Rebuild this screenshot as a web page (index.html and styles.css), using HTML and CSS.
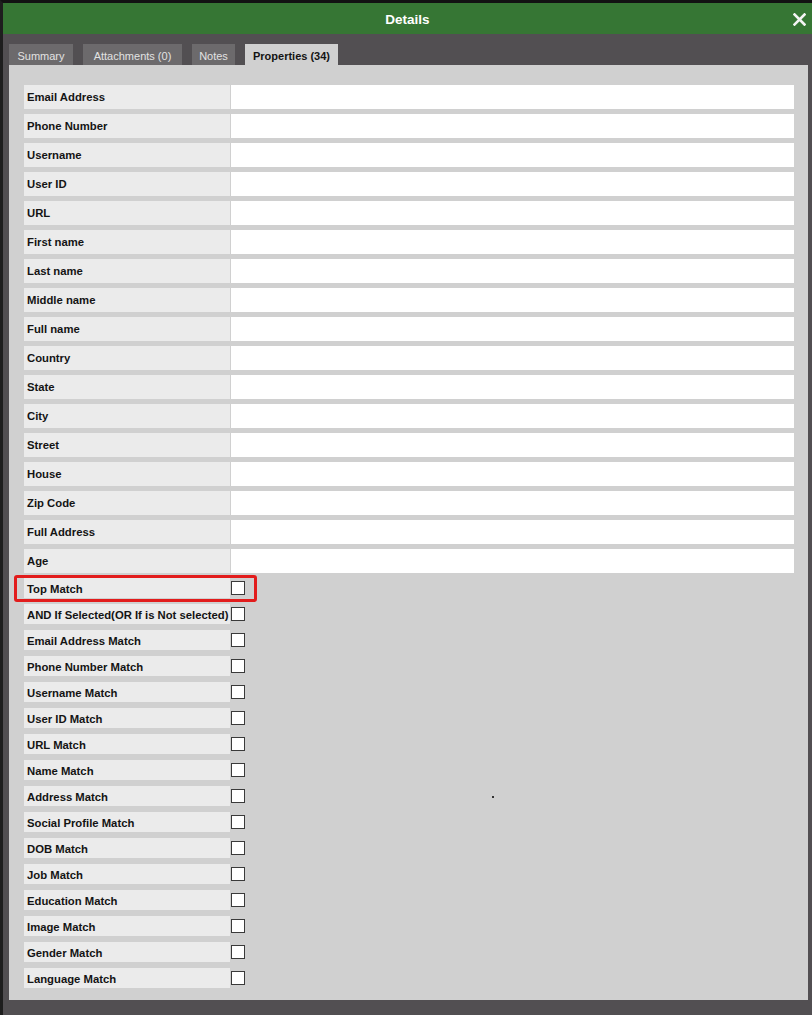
FILE: index.html
```html
<!DOCTYPE html>
<html>
<head>
<meta charset="utf-8">
<title>Details</title>
<link rel="stylesheet" href="styles.css">
</head>
<body>
<div class="window">
  <div class="titlebar">
    <span class="title">Details</span>
    <svg class="close" width="13" height="13" viewBox="0 0 13 13"><path d="M1.5 1.5 L11.5 11.5 M11.5 1.5 L1.5 11.5" stroke="#f4f4f4" stroke-width="2.6" stroke-linecap="square"/></svg>
  </div>
  <div class="tabbar">
    <div class="tab t-summary">Summary</div>
    <div class="tab t-attach">Attachments (0)</div>
    <div class="tab t-notes">Notes</div>
    <div class="tab t-props active">Properties (34)</div>
  </div>
  <div class="panel">
    <div class="fields">
      <div class="row"><div class="label">Email Address</div><div class="input"></div></div>
      <div class="row"><div class="label">Phone Number</div><div class="input"></div></div>
      <div class="row"><div class="label">Username</div><div class="input"></div></div>
      <div class="row"><div class="label">User ID</div><div class="input"></div></div>
      <div class="row"><div class="label">URL</div><div class="input"></div></div>
      <div class="row"><div class="label">First name</div><div class="input"></div></div>
      <div class="row"><div class="label">Last name</div><div class="input"></div></div>
      <div class="row"><div class="label">Middle name</div><div class="input"></div></div>
      <div class="row"><div class="label">Full name</div><div class="input"></div></div>
      <div class="row"><div class="label">Country</div><div class="input"></div></div>
      <div class="row"><div class="label">State</div><div class="input"></div></div>
      <div class="row"><div class="label">City</div><div class="input"></div></div>
      <div class="row"><div class="label">Street</div><div class="input"></div></div>
      <div class="row"><div class="label">House</div><div class="input"></div></div>
      <div class="row"><div class="label">Zip Code</div><div class="input"></div></div>
      <div class="row"><div class="label">Full Address</div><div class="input"></div></div>
      <div class="row"><div class="label">Age</div><div class="input"></div></div>
    </div>
    <div class="checks">
      <div class="crow highlighted"><div class="label">Top Match</div><div class="box"></div></div>
      <div class="crow"><div class="label">AND If Selected(OR If is Not selected)</div><div class="box"></div></div>
      <div class="crow"><div class="label">Email Address Match</div><div class="box"></div></div>
      <div class="crow"><div class="label">Phone Number Match</div><div class="box"></div></div>
      <div class="crow"><div class="label">Username Match</div><div class="box"></div></div>
      <div class="crow"><div class="label">User ID Match</div><div class="box"></div></div>
      <div class="crow"><div class="label">URL Match</div><div class="box"></div></div>
      <div class="crow"><div class="label">Name Match</div><div class="box"></div></div>
      <div class="crow"><div class="label">Address Match</div><div class="box"></div><span class="dot"></span></div>
      <div class="crow"><div class="label">Social Profile Match</div><div class="box"></div></div>
      <div class="crow"><div class="label">DOB Match</div><div class="box"></div></div>
      <div class="crow"><div class="label">Job Match</div><div class="box"></div></div>
      <div class="crow"><div class="label">Education Match</div><div class="box"></div></div>
      <div class="crow"><div class="label">Image Match</div><div class="box"></div></div>
      <div class="crow"><div class="label">Gender Match</div><div class="box"></div></div>
      <div class="crow"><div class="label">Language Match</div><div class="box"></div></div>
    </div>
  </div>
</div>
</body>
</html>
```

FILE: styles.css
```css
html, body {
  margin: 0;
  padding: 0;
  background: #524f52;
  font-family: "Liberation Sans", Arial, sans-serif;
}

.window {
  width: 812px;
  height: 1015px;
  box-sizing: border-box;
  border-top: 3px solid #121212;
  border-left: 3px solid #1e1e1e;
  background: #524f52;
}

.titlebar {
  height: 31px;
  background: #367634;
  display: flex;
  align-items: center;
  justify-content: center;
  position: relative;
}

.title {
  color: #ffffff;
  font-weight: bold;
  font-size: 13.5px;
  margin-top: 2px;
}

.close {
  position: absolute;
  right: 6px;
  top: 10px;
}

.tabbar {
  height: 31px;
  box-sizing: border-box;
  padding: 10px 0 0 6px;
  display: flex;
  align-items: flex-end;
  gap: 10px;
}

.tab {
  height: 21px;
  box-sizing: border-box;
  padding-top: 2px;
  display: flex;
  align-items: center;
  justify-content: center;
  background: #6c6a6c;
  color: #e2e2e2;
  font-size: 11px;
  white-space: nowrap;
}

.t-summary { width: 64px; }
.t-attach { width: 99px; }
.t-notes { width: 43px; }
.t-props { width: 93px; }

.tab.active {
  background: #d0d0d0;
  color: #141414;
  font-weight: bold;
}

.panel {
  margin: 0 4px 0 6px;
  background: #d0d0d0;
  padding: 20px 14px 12px 15px;
  position: relative;
}

.fields {
  display: flex;
  flex-direction: column;
  gap: 5px;
}

.row {
  display: flex;
  height: 24px;
}

.label {
  width: 206px;
  flex: none;
  box-sizing: border-box;
  padding-left: 3px;
  background: #ebebeb;
  color: #141414;
  font-weight: bold;
  font-size: 11.3px;
  display: flex;
  align-items: center;
  white-space: nowrap;
}

.row .input {
  flex: 1;
  margin-left: 1px;
  background: #ffffff;
}

.checks {
  margin-top: 5px;
  display: flex;
  flex-direction: column;
  gap: 6px;
}

.crow {
  display: flex;
  align-items: center;
  height: 20px;
  position: relative;
}

.crow .label {
  align-self: stretch;
  padding-top: 2px;
}

.box {
  width: 14px;
  height: 14px;
  box-sizing: border-box;
  margin-left: 1px;
  background: #ffffff;
  border: 1px solid #3a3a3a;
}

.highlighted::after {
  content: "";
  position: absolute;
  left: -10px;
  top: -3px;
  width: 243px;
  height: 27px;
  box-sizing: border-box;
  border: 3px solid #e21c1c;
  border-radius: 3px;
}

.dot {
  position: absolute;
  left: 468px;
  top: 10px;
  width: 2px;
  height: 2px;
  background: #333333;
}
```
